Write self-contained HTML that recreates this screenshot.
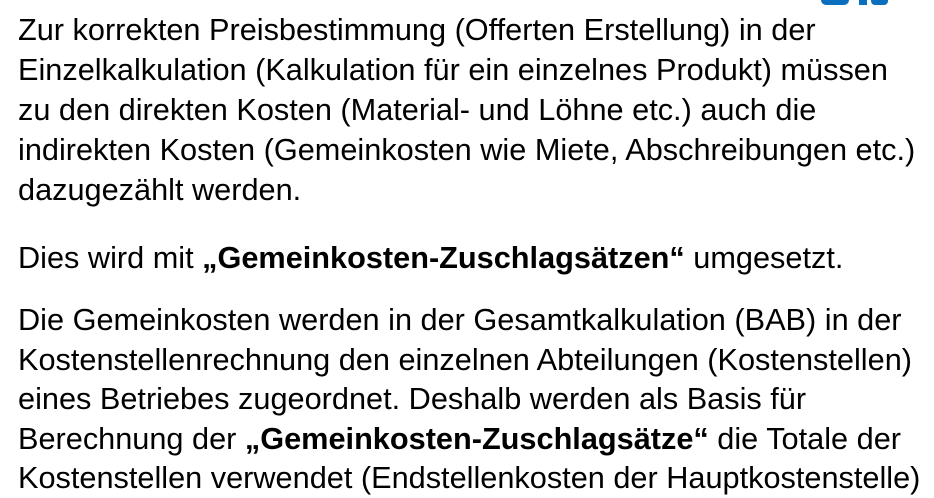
<!DOCTYPE html>
<html><head><meta charset="utf-8"><style>
body{margin:0;width:934px;height:498px;background:#fff;position:relative;overflow:hidden;font-family:"Liberation Sans",Arial,sans-serif;font-size:30.7px;color:#000}
.l{position:absolute;left:18px;height:40px;line-height:40px;white-space:nowrap}
.lg{position:absolute;background:#0b6fc0}
</style></head><body>
<div class="lg" style="left:821px;top:0;width:28px;height:5px;border-radius:0 0 12px 12px"></div>
<div class="lg" style="left:859px;top:0;width:8px;height:5px"></div>
<div class="lg" style="left:871px;top:0;width:17px;height:5px;border-radius:0 0 4px 4px"></div>
<div class="l" style="top:10px">Zur korrekten Preisbestimmung (Offerten Erstellung) in der</div>
<div class="l" style="top:50px">Einzelkalkulation (Kalkulation für ein einzelnes Produkt) müssen</div>
<div class="l" style="top:90px">zu den direkten Kosten (Material- und Löhne etc.) auch die</div>
<div class="l" style="top:130px">indirekten Kosten (Gemeinkosten wie Miete, Abschreibungen etc.)</div>
<div class="l" style="top:170px">dazugezählt werden.</div>
<div class="l" style="top:238px">Dies wird mit <b>„Gemeinkosten-Zuschlagsätzen“</b> umgesetzt.</div>
<div class="l" style="top:300px">Die Gemeinkosten werden in der Gesamtkalkulation (BAB) in der</div>
<div class="l" style="top:340px">Kostenstellenrechnung den einzelnen Abteilungen (Kostenstellen)</div>
<div class="l" style="top:379px">eines Betriebes zugeordnet. Deshalb werden als Basis für</div>
<div class="l" style="top:419px">Berechnung der <b>„Gemeinkosten-Zuschlagsätze“</b> die Totale der</div>
<div class="l" style="top:458px">Kostenstellen verwendet (Endstellenkosten der Hauptkostenstelle)</div>
</body></html>
